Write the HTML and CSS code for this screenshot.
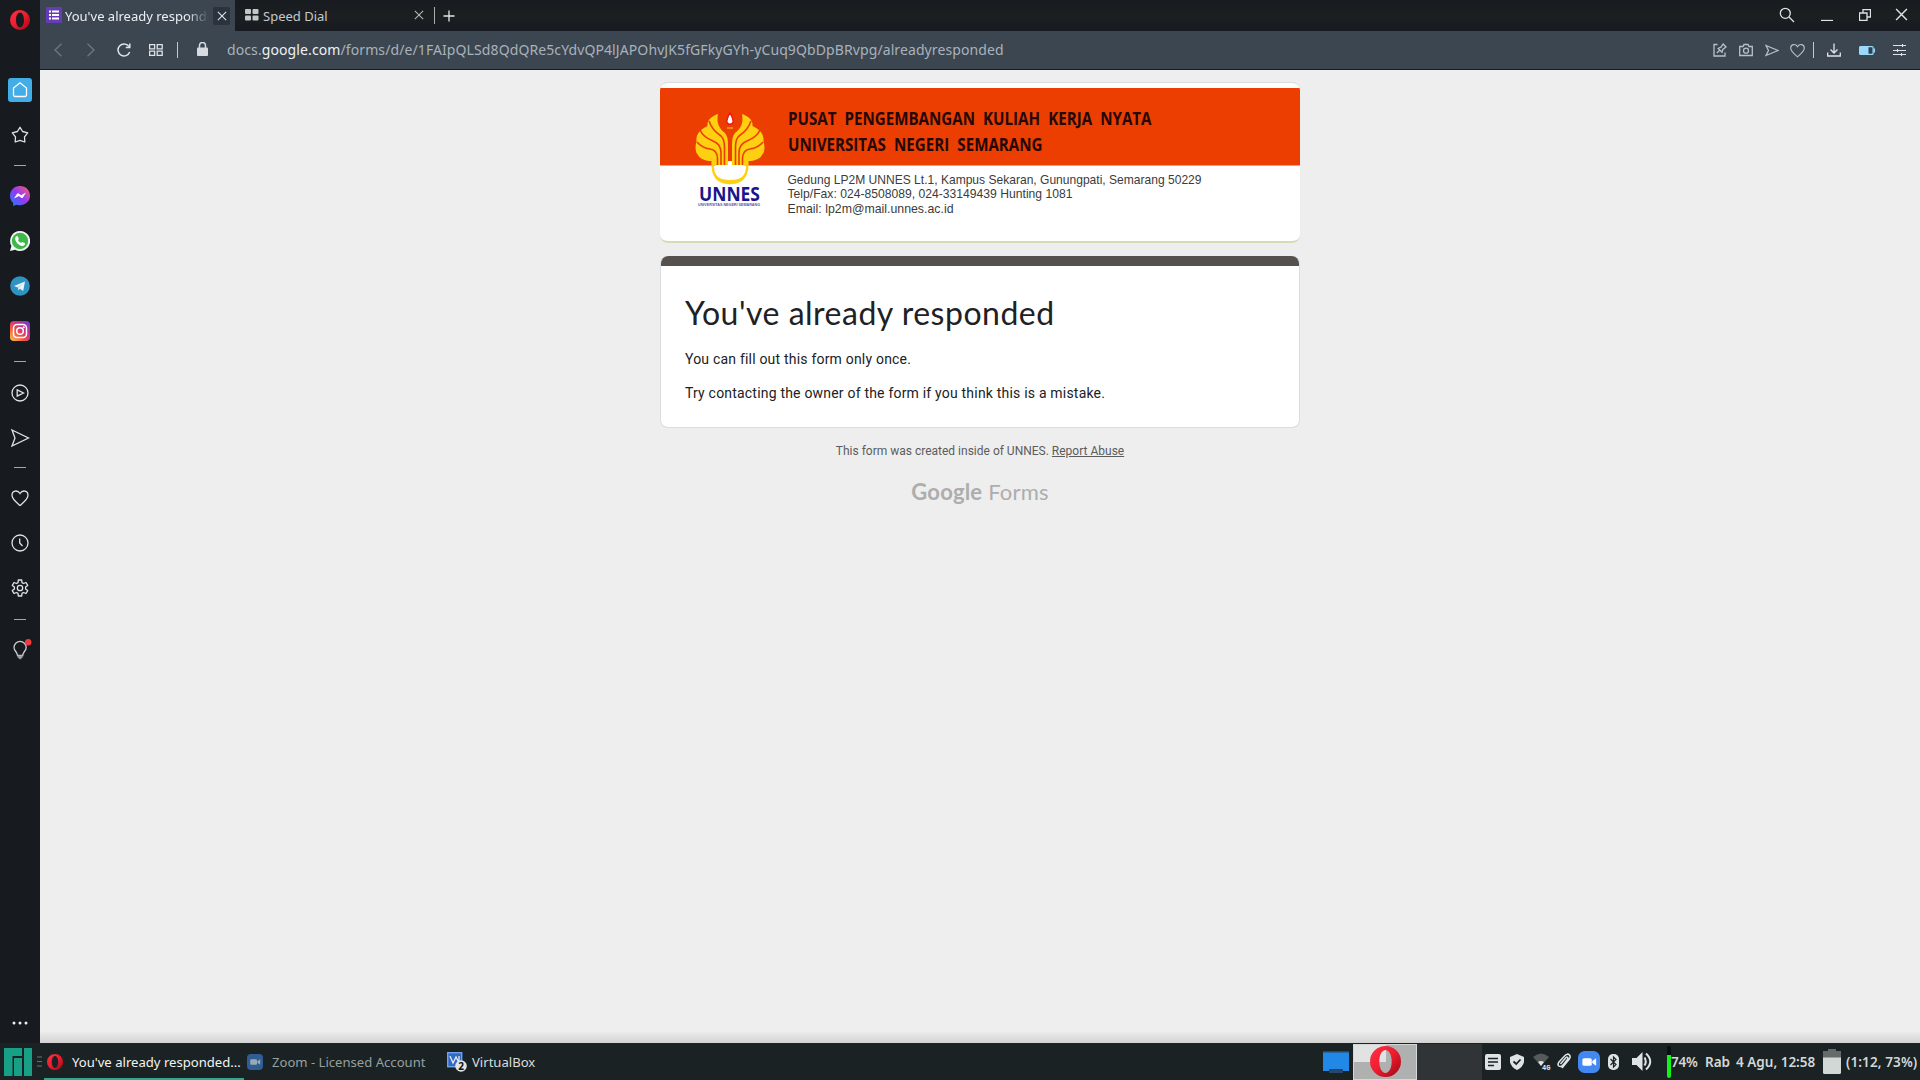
FILE: index.html
```html
<!DOCTYPE html>
<html lang="en">
<head>
<meta charset="utf-8">
<title>You've already responded</title>
<link rel="stylesheet" href="styles.css">
</head>
<body>
<svg width="0" height="0" class="defs" aria-hidden="true">
  <defs>
    <linearGradient id="opera" x1="0" y1="0" x2="1" y2="1"><stop offset="0" stop-color="#ff3344"/><stop offset=".5" stop-color="#ee1c2e"/><stop offset="1" stop-color="#9c0712"/></linearGradient>
    <linearGradient id="msg" x1="0" y1="1" x2="1" y2="0"><stop offset="0" stop-color="#1684ff"/><stop offset=".5" stop-color="#9438f5"/><stop offset="1" stop-color="#ff626b"/></linearGradient>
    <linearGradient id="insta" x1="0" y1="1" x2="1" y2="0"><stop offset="0" stop-color="#ffcf55"/><stop offset=".35" stop-color="#f5583f"/><stop offset=".65" stop-color="#c62f92"/><stop offset="1" stop-color="#5b45d0"/></linearGradient>
    <symbol id="opera-o" viewBox="0 0 20 20"><path fill="url(#opera)" fill-rule="evenodd" d="M10 0a10 10 0 1 0 0 20a10 10 0 1 0 0-20M10 2.600c2.300 0 4 3.200 4 7.400s-1.700 7.400-4 7.400s-4-3.200-4-7.400s1.700-7.400 4-7.400"/></symbol>
    <symbol id="heart" viewBox="0 0 20 20"><path d="M10 17.500C6 14 2 11 2 7.200C2 2.500 7.500 1.500 10 5.500C12.500 1.500 18 2.500 18 7.200C18 11 14 14 10 17.500z"/></symbol>
    <symbol id="send" viewBox="0 0 20 20"><path d="M2 2L18.500 10L2 18L5 10z"/></symbol>
    <symbol id="cross" viewBox="0 0 12 12"><path d="M1 1L11 11M11 1L1 11"/></symbol>
    <symbol id="camcorder" viewBox="0 0 20 20"><rect x="4" y="6.500" width="8.500" height="7" rx="1.500"/><path d="M13 9l3.500-2.300v6.600L13 11z"/></symbol>
  </defs>
</svg>

<div class="desktop">
  <div class="browser">
    <nav class="sidebar">
      <div class="logo"><svg width="20" height="20"><use href="#opera-o"/></svg></div>
      <div class="slot"><span class="home"><svg class="line" width="18" height="18" viewBox="0 0 18 18"><path d="M2.500 7L9 1.800L15.500 7V14a1.500 1.500 0 0 1-1.500 1.500H4A1.500 1.500 0 0 1 2.500 14z"/></svg></span></div>
      <div class="slot"><svg class="line" width="18" height="18" viewBox="0 0 18 18"><path stroke-linejoin="round" d="M9 1.300L11.600 5.500L16.700 6.800L13.500 10.800L13.800 16L9 14.300L4.200 16L4.500 10.800L1.300 6.800L6.400 5.500z"/></svg></div>
      <div class="dash"></div>
      <div class="slot"><svg width="20" height="20" viewBox="0 0 20 20"><path fill="url(#msg)" d="M10 0C4.300 0 0 4.200 0 9.700c0 2.900 1.200 5.400 3.100 7.100L3.200 20L6.200 18.700C13 20.500 20 16.500 20 9.700C20 4.200 15.700 0 10 0z"/><path fill="#fff" d="M4 12.500L7 7.800q.8-1 1.800-.3L11 9.200L16 6.500L13 11.400q-.8 1-1.800.3L9 10z"/></svg></div>
      <div class="slot"><svg width="20" height="20" viewBox="0 0 20 20"><path fill="#f2f6f2" d="M10 0a10 10 0 1 1-4.800 18.700L0 20L1.400 15A10 10 0 0 1 10 0z"/><circle cx="10" cy="10" r="8.200" fill="#3fb84b"/><path fill="#fff" d="M6.300 5.200l1.300-.3L8.900 8l-.9 1.200q1.200 2 3 2.900l1.200-1.200L15 12.300q0 2.700-2.700 2.700C8.500 14.500 5.300 11 5.100 7.500q.2-1.500 1.200-2.300z"/></svg></div>
      <div class="slot"><svg width="20" height="20" viewBox="0 0 20 20"><circle cx="10" cy="10" r="9.800" fill="#2f93c2"/><path fill="#e9f3fa" d="M4 10L15 5.500L13.200 15L10 12.800L8.300 14.300L7.800 11.400z"/><path fill="#9fc6dd" d="M8.300 14.300L8.600 11.700L13 7.500L7.800 11.200z"/></svg></div>
      <div class="slot"><svg width="20" height="20" viewBox="0 0 20 20"><rect width="20" height="20" rx="4" fill="url(#insta)"/><g fill="none" stroke="#fff" stroke-width="1.500"><rect x="3.500" y="3.500" width="13" height="13" rx="3.500"/><circle cx="10" cy="10" r="3.300"/></g><circle cx="13.800" cy="6.200" r="1" fill="#fff"/></svg></div>
      <div class="dash wide"></div>
      <div class="slot"><svg class="line" width="18" height="18" viewBox="0 0 18 18"><circle cx="9" cy="9" r="8"/><path d="M6.200 5.800L12.500 9L6.200 12.200z"/></svg></div>
      <div class="slot"><svg class="line" width="20" height="20"><use href="#send"/></svg></div>
      <div class="dash"></div>
      <div class="slot"><svg class="line" width="20" height="20"><use href="#heart"/></svg></div>
      <div class="slot"><svg class="line" width="18" height="18" viewBox="0 0 18 18"><circle cx="9" cy="9" r="8"/><path d="M8.700 4.500V9L11.500 12"/></svg></div>
      <div class="slot"><svg class="line" width="18" height="18" viewBox="0 0 18 18"><circle cx="9" cy="9" r="2.700"/><path stroke-linejoin="round" d="M7.300 1h3.400l.3 2.600l1.600.9L15 3.500l1.700 2.900L14.600 8v2l2.100 1.600L15 14.500l-2.400-1l-1.600.9l-.3 2.600H7.300L7 14.400l-1.600-.9L3 14.500L1.300 11.600L3.400 10V8L1.300 6.400L3 3.500l2.400 1L7 3.600z"/></svg></div>
      <div class="dash wide"></div>
      <div class="slot"><svg width="24" height="22" viewBox="0 0 24 22"><path fill="none" stroke="#c9ccd0" stroke-width="1.300" d="M9.500 16.500C9.500 13 6 12 6 8.500a6.100 6.100 0 0 1 12.200 0C18.200 12 14.700 13 14.700 16.500z"/><path fill="#9ba0a6" d="M9.600 16.500h5v2l-2.500 2l-2.500-2z"/><circle cx="20.200" cy="3.300" r="3.200" fill="#f03a3e"/></svg></div>
      <div class="more"><svg width="16" height="4" viewBox="0 0 16 4" fill="#eceef0"><circle cx="2" cy="2" r="1.500"/><circle cx="8" cy="2" r="1.500"/><circle cx="14" cy="2" r="1.500"/></svg></div>
    </nav>

    <div class="window">
      <header class="tabs">
        <div class="tab active">
          <svg width="16" height="16" viewBox="0 0 16 16"><rect width="16" height="16" rx="1" fill="#673ab7"/><path fill="#fff" d="M3 3.500h2v2H3zM6 3.500h7v2H6zM3 7h2v2H3zM6 7h7v2H6zM3 10.500h2v2H3zM6 10.500h7v2H6z"/></svg>
          <span class="tab-title">You've already responded</span>
          <span class="tab-close"><svg class="line" width="10" height="10"><use href="#cross"/></svg></span>
        </div>
        <div class="tab idle">
          <svg width="14" height="12" viewBox="0 0 14 12" fill="#c3c6c9"><rect width="6" height="5" rx="1"/><rect x="7.500" width="6" height="5" rx="1"/><rect y="6.500" width="6" height="5" rx="1"/><rect x="7.500" y="6.500" width="6" height="5" rx="1"/></svg>
          <span class="tab-title">Speed Dial</span>
          <svg class="line dim" width="10" height="10"><use href="#cross"/></svg>
        </div>
        <span class="tab-rule"></span>
        <svg class="plus" width="12" height="12" viewBox="0 0 12 12"><path d="M6 .5v11M.5 6h11"/></svg>
        <div class="controls">
          <svg class="line" width="16" height="16" viewBox="0 0 16 16"><circle cx="6.300" cy="6.300" r="5"/><path d="M10 10L15 15"/></svg>
          <svg class="line low" width="12" height="12" viewBox="0 0 12 12"><path d="M0 11.500h12"/></svg>
          <svg class="line" width="12" height="12" viewBox="0 0 12 12"><path d="M4 3.500V.5h7.500V8H8.500M.5 4H8v7.500H.5z"/></svg>
          <svg class="line" width="13" height="13"><use href="#cross"/></svg>
        </div>
      </header>

      <div class="toolbar">
        <svg class="line off" width="8" height="14" viewBox="0 0 8 14"><path d="M7.500 .8L1 7L7.500 13.200"/></svg>
        <svg class="line off fwd" width="8" height="14" viewBox="0 0 8 14"><path d="M.5 .8L7 7L.5 13.200"/></svg>
        <svg class="line reload" width="14" height="14" viewBox="0 0 14 14"><path stroke-width="1.500" d="M12.700 9A6 6 0 1 1 11.800 3.300M12.800 .5V4.500H8.800"/></svg>
        <svg class="line grid" width="14" height="12" viewBox="0 0 14 12"><path d="M.6.600h5v4.200h-5zM8.200.600h5v4.200h-5zM.6 7.200h5v4.200h-5zM8.200 7.200h5v4.200h-5z"/></svg>
        <span class="rule"></span>
        <svg class="lock" width="11" height="14" viewBox="0 0 11 14"><rect y="5.500" width="11" height="8.500" rx="1" fill="#d7dade"/><path fill="none" stroke="#d7dade" stroke-width="1.500" d="M2.500 6V3.500a3 3 0 0 1 6 0V6"/></svg>
        <span class="url">docs.<b>google.com</b>/forms/d/e/1FAIpQLSd8QdQRe5cYdvQP4lJAPOhvJK5fGFkyGYh-yCuq9QbDpBRvpg/alreadyresponded</span>
        <div class="actions">
          <svg class="line" width="14" height="14" viewBox="0 0 14 14"><path d="M4.500 1.500H1V13H12V9.500M3.800 10L6.500 7.500M5.200 5.500L9 9.200L9.800 6.500L13 4L10.200 1L8 4.200z"/></svg>
          <svg class="line" width="14" height="14" viewBox="0 0 14 14"><path d="M.7 3.500H4L5 1.500h4l1 2h3.300V12.500H.7z"/><circle cx="7" cy="7.700" r="2.500"/></svg>
          <svg class="line" width="14" height="13" viewBox="0 0 14 13"><path d="M1 1.500L13 6.500L1 11.500L3.500 6.500z"/></svg>
          <svg class="line" width="17" height="17"><use href="#heart"/></svg>
          <span class="rule"></span>
          <svg class="line down" width="14" height="14" viewBox="0 0 14 14"><path d="M7 .5V10M3.500 6.500L7 10L10.500 6.500M.7 9.500V13H13.300V9.500"/></svg>
          <svg class="batt" width="16" height="9" viewBox="0 0 16 9"><rect x=".6" y=".6" width="13.500" height="7.800" rx="1" fill="#2b4254" stroke="#9bd8fb" stroke-width="1.200"/><path fill="#9bd8fb" d="M.5 .5h9v8h-9zM14.500 2.500H16v4h-1.500z"/></svg>
          <svg class="line" width="13" height="12" viewBox="0 0 13 12"><path stroke-width="1.100" d="M0 1.500h13M0 6.500h13M0 10.500h13M9.500 0v3M4.500 5v3M8.500 9v3"/></svg>
        </div>
      </div>

      <main class="page">
        <section class="banner">
          <svg width="640" height="154" viewBox="0 0 640 154">
            <rect width="640" height="77.500" fill="#eb3e00"/>
            <g id="unnes">
              <path d="M55 77Q54 95 70 95Q86 95 85 77Q81 73 70 73Q59 73 55 77z" fill="#fff"/>
              <path fill="#ffcf12" d="M58 26C50 29 47 33 47.500 38C39 42 36 47 36.500 53C35 59 35 64 38 67C40 71 46 73 51.500 73C51 82 53 91 60 94C66 97 74 97 80 94C87 91 89 82 88.500 73C94 73 100 71 102 67C105 64 105 59 103.500 53C104 47 101 42 92.500 38C93 33 90 29 82 26C84 36 80 41 75 45Q72 48 72 57V77H82L86 78C86 88 81 92 70 92C59 92 54 88 54 78L58 77H68V57Q68 48 65 45C60 41 56 36 58 26z"/>
              <g fill="none" stroke="#eb3e00" stroke-width="1.600">
                <path d="M49 33Q52 42 61 48Q64.500 51 64.500 59V77M40 42Q43 49 53 53Q61 56 61 65V77M37 54Q42 60 50 61Q57 62 57.500 70V77"/>
                <path d="M91 33Q88 42 79 48Q75.500 51 75.500 59V77M100 42Q97 49 87 53Q79 56 79 65V77M103 54Q98 60 90 61Q83 62 82.500 70V77"/>
              </g>
              <path fill="#fff" stroke="#f11212" stroke-width="1.300" d="M70 25Q66.500 31 67 34.500Q70 38 73 34.500Q73.500 31 70 25z"/>
              <path d="M67 40h6" stroke="#ffcf12"/>
            </g>
            <text class="unnes" x="39" y="112.500" textLength="61" lengthAdjust="spacingAndGlyphs">UNNES</text>
            <text class="tiny" x="38" y="118" textLength="62" lengthAdjust="spacingAndGlyphs">UNIVERSITAS NEGERI SEMARANG</text>
            <g class="head">
              <text x="128" y="37" textLength="363.500" lengthAdjust="spacingAndGlyphs">PUSAT PENGEMBANGAN KULIAH KERJA NYATA</text>
              <text x="128" y="62.500" textLength="254.500" lengthAdjust="spacingAndGlyphs">UNIVERSITAS NEGERI SEMARANG</text>
            </g>
            <g class="addr">
              <text x="127.500" y="96" textLength="414" lengthAdjust="spacingAndGlyphs">Gedung LP2M UNNES Lt.1, Kampus Sekaran, Gunungpati, Semarang 50229</text>
              <text x="127.500" y="110.400" textLength="285" lengthAdjust="spacingAndGlyphs">Telp/Fax: 024-8508089, 024-33149439 Hunting 1081</text>
              <text x="127.500" y="125" textLength="166" lengthAdjust="spacingAndGlyphs">Email: lp2m@mail.unnes.ac.id</text>
            </g>
          </svg>
        </section>
        <section class="card">
          <h1>You've already responded</h1>
          <p>You can fill out this form only once.</p>
          <p>Try contacting the owner of the form if you think this is a mistake.</p>
        </section>
        <p class="foot">This form was created inside of UNNES. <u>Report Abuse</u></p>
        <p class="brand"><b>Google</b> Forms</p>
      </main>
    </div>
  </div>

  <footer class="taskbar">
    <svg class="manjaro" width="28" height="28" viewBox="0 0 28 28" fill="#17a086"><path d="M0 0H18V8H8.500V28H0zM10 10h8v18h-8zM20 0h8v28h-8z"/></svg>
    <svg class="grip" width="5" height="11" viewBox="0 0 5 11" stroke="#6a7271"><path d="M0 1h5M0 5.500h5M0 10h5"/></svg>
    <div class="task current"><svg width="16" height="16"><use href="#opera-o"/></svg><span>You've already responded...</span></div>
    <div class="task dimmed"><svg width="16" height="16" viewBox="0 0 20 20"><rect width="20" height="20" rx="5" fill="#315d95"/><use href="#camcorder" fill="#9aa9b8"/></svg><span>Zoom - Licensed Account</span></div>
    <div class="task vbox"><svg width="20" height="20" viewBox="0 0 20 20"><rect x=".7" y=".7" width="14" height="14" fill="#3268c0" stroke="#70a3ee" stroke-width="1.400"/><path d="M3 4l3 7l3-6l3 6V4" fill="none" stroke="#e3edfb" stroke-width="1.300"/><circle cx="14" cy="14" r="5.800" fill="#e2e4e4"/><text x="14" y="17.500">2</text></svg><span>VirtualBox</span></div>

    <div class="tray">
      <svg class="show" width="26" height="22" viewBox="0 0 26 22"><path fill="#2188e5" d="M0 1h26v19H0z"/><path fill="#24476b" d="M0 0h26v1.500H0zM6 18h14v4H6z"/></svg>
      <div class="pager on"><span class="mini"></span><svg width="31" height="31"><use href="#opera-o"/></svg></div>
      <div class="pager"></div>
      <svg class="t1" width="16" height="16" viewBox="0 0 16 16"><rect width="16" height="16" rx="2" fill="#dfe3e3"/><path stroke="#1b2224" stroke-width="1.500" d="M3 4.500h10M3 8h10M3 11.500h6"/></svg>
      <svg class="t2" width="14" height="16" viewBox="0 0 14 16"><path fill="#dfe3e3" d="M7 0L14 3V8Q13 13 7 16Q1 13 0 8V3z"/><path fill="none" stroke="#1b2224" stroke-width="1.800" d="M3.500 7.500L6.200 10L10.500 5.500"/></svg>
      <svg class="t3" width="18" height="17" viewBox="0 0 18 17"><path fill="#555a5b" d="M0 4Q8 -3 16 4L8 13z"/><path fill="#dfe3e3" d="M5 9Q8 7 11 9L8 13z"/><text x="9" y="16.500">4G</text></svg>
      <svg class="t4" width="14" height="17" viewBox="0 0 14 17"><path fill="none" stroke="#dfe3e3" stroke-width="1.500" d="M3.500 11L9 4.500Q10.500 3.500 11 5Q11 6 6 12Q4 14.500 1.800 13Q.2 11.500 2 9L8 2.500Q10.500 0 12.500 2Q14 4 12 6.500L5 15"/></svg>
      <svg class="t5" width="22" height="22" viewBox="0 0 20 20"><rect width="20" height="20" rx="6" fill="#4388f2"/><use href="#camcorder" fill="#fff"/></svg>
      <svg class="t6" width="11" height="16" viewBox="0 0 11 16"><rect width="11" height="16" rx="5" fill="#dfe3e3"/><path fill="none" stroke="#1b2224" stroke-width="1.200" d="M2.500 5L8 10.500L5.500 13V3L8 5.500L2.500 11"/></svg>
      <svg class="t7" width="20" height="19" viewBox="0 0 20 19"><path fill="#dfe3e3" d="M0 6H4.500L10.500 0V19L4.500 13H0z"/><path fill="none" stroke="#dfe3e3" stroke-width="2" d="M12.500 5.500Q15 9.500 12.500 13.500M14 1.500Q22.500 9.500 14 17.500"/></svg>
      <span class="meter"></span>
      <span class="pct">74%</span>
      <span class="clock"><span>Rab</span><span>4 Agu, 12:58</span></span>
      <svg class="cell" width="18" height="25" viewBox="0 0 18 25"><path fill="#656b6b" d="M5 0h8v2h5v8H0V2h5z"/><path fill="#d2d8d6" d="M0 8.500h18V23.500q0 1.500-1.500 1.500h-15Q0 25 0 23.500z"/></svg>
      <span class="left">(1:12, 73%)</span>
    </div>
  </footer>
</div>
</body>
</html>
```

FILE: styles.css
```css
* { box-sizing: border-box; }
body { margin: 0; font-family: "Noto Sans", sans-serif; overflow: hidden; background: #181b1f; }
svg { display: block; flex: none; }
.defs { position: absolute; }
.line { fill: none; stroke: #dfe3e7; stroke-width: 1.3; }
.desktop { display: flex; flex-direction: column; width: 1920px; height: 1080px; }
.browser { display: flex; height: 1043px; }

.sidebar { display: flex; flex-direction: column; width: 40px; background: #171b20; flex: none; }
.logo { display: flex; justify-content: center; padding-top: 10px; height: 67.5px; }
.logo svg { height: 20px; }
.slot { display: flex; align-items: center; justify-content: center; height: 45px; }
.home { display: grid; place-items: center; width: 24px; height: 24px; border-radius: 3px; background: #42ade6; }
.home .line { stroke: #fff; }
.dash { width: 12px; height: 1px; margin: 7px auto 7.5px; background: #a3a7ab; }
.dash.wide { margin: 8px auto; }
.more { display: flex; justify-content: center; margin-top: auto; padding-bottom: 18px; }

.window { flex: 1; display: flex; flex-direction: column; min-width: 0; }
.tabs { display: flex; align-items: center; height: 31px; background: linear-gradient(#181b20, #1b1f21 55%, #171a20); color: #c5c8cb; font-size: 13px; }
.tab { display: flex; align-items: center; height: 31px; }
.tab-title { white-space: nowrap; overflow: hidden; line-height: 20px; padding-top: 1px; }
.active { width: 195px; padding-left: 6px; background: #3b4651; color: #eceff2; }
.active .tab-title { width: 144px; margin-left: 3px; -webkit-mask-image: linear-gradient(90deg, #000 122px, transparent 144px); mask-image: linear-gradient(90deg, #000 122px, transparent 144px); }
.active svg, .idle svg { margin-top: -1px; }
.tab-close { display: grid; place-items: center; width: 17px; height: 18px; margin-left: 4px; background: #2a333c; border-radius: 2px; }
.tab-close svg { margin: 0; }
.idle { width: 199px; padding-left: 10px; }
.idle .tab-title { width: 151px; margin-left: 4px; }
.idle .dim { stroke: #b5b8bb; }
.tab-rule { width: 1px; height: 17px; background: #a9adb0; }
.plus { margin-left: 8px; stroke: #e5e7e9; stroke-width: 1.3; }
.controls { display: flex; align-items: center; margin-left: auto; padding: 0 12px 2px 0; }
.controls svg + svg { margin-left: 26px; }
.controls .low { padding-top: 0; }
.controls svg:nth-child(4) { margin-left: 24px; }

.toolbar { display: flex; align-items: center; height: 39px; padding: 0 14px; background: #3b4651; border-bottom: 1px solid #171b20; }
.off { stroke: #6d7780; }
.fwd { margin-left: 25px; }
.reload { margin-left: 22px; }
.grid { margin-left: 18px; }
.rule { width: 1px; height: 16px; background: #c3c8cd; }
.grid + .rule { margin-left: 14px; }
.lock { margin-left: 19px; margin-top: -2px; }
.url { margin-left: 19px; font-size: 14px; line-height: 20px; letter-spacing: .1px; color: #a9b2bb; white-space: nowrap; }
.url b { font-weight: 400; color: #eef1f4; }
.actions { display: flex; align-items: center; margin-left: auto; }
.actions svg { margin-left: 12px; }
.actions .line:nth-child(-n+4) { stroke: #b8c0c8; }
.actions svg:nth-child(4) { margin-left: 10px; }
.actions .rule { margin-left: 7px; }
.actions .down { margin-left: 13px; }
.actions .batt { margin-left: 18px; }
.actions .batt + svg { margin-left: 18px; }

.page { flex: 1; display: flex; flex-direction: column; align-items: center; padding-top: 12px; background: linear-gradient(#eee calc(100% - 12px), #d2d2d2); }
.banner { width: 640px; height: 161px; padding-top: 5px; background: #fff; border-radius: 8px; border-top: 1px solid #dadce0; border-bottom: 2px solid #d5dcb5; overflow: hidden; }
.head text { font: 700 18px "Open Sans", sans-serif; fill: #24080a; word-spacing: 5px; }
.addr text { font: 13.3px "Liberation Sans", sans-serif; fill: #3b3b3b; }
.unnes { font: 700 19px "Open Sans", sans-serif; fill: #1b148c; }
.tiny { font: 700 3.5px "Liberation Sans", sans-serif; fill: #5a55a8; }
.card { width: 640px; height: 172px; margin-top: 13px; padding: 35px 24px 0; background: linear-gradient(#55514f 10px, #fff 10px) border-box; border: 1px solid #dadce0; border-top: 0; border-radius: 8px; font-family: Roboto, sans-serif; color: #202124; }
h1 { margin: 0 0 14px; font: 400 32px/44px Lato, sans-serif; letter-spacing: .5px; white-space: nowrap; }
.card p { margin: 0 0 14px; font-size: 14px; line-height: 20px; letter-spacing: .2px; }
.foot { margin: 14px 0 0; font: 12px/18px Roboto, sans-serif; color: #5c5c5c; }
.brand { margin: 17px 0 0; font: 400 22px/30px Lato, sans-serif; letter-spacing: .2px; color: #adadad; white-space: nowrap; }
.brand b { font-weight: 700; }

.taskbar { display: flex; align-items: center; height: 37px; padding-left: 4px; background: #1b2224; font-size: 13.1px; color: #d9dddc; white-space: nowrap; }
.grip { margin-left: 5px; }
.task { display: flex; align-items: center; height: 37px; border-bottom: 2px solid transparent; border-top: 2px solid transparent; }
.current { width: 200px; margin-left: 2px; padding-left: 3px; border-bottom-color: #2fa88d; color: #f1f3f3; }
.current span { margin-left: 9px; }
.dimmed { width: 199px; padding-left: 3px; color: #98a09f; }
.dimmed span { margin-left: 9px; }
.vbox { padding-left: 4px; }
.vbox span { margin-left: 5px; }
.vbox text { font: 700 10px "Noto Sans", sans-serif; text-anchor: middle; fill: #111; }
.tray { display: flex; align-items: center; height: 37px; width: 597px; margin-left: auto; font-size: 13.5px; font-weight: 600; color: #d3d8d7; }
.pager { width: 65px; height: 36px; background: #303436; }
.on { display: grid; place-items: center; width: 64px; margin-left: 4px; background: #afb1b1; border: 1px solid #d5d8d8; }
.on > * { grid-area: 1 / 1; }
.mini { place-self: start; width: 32px; height: 17px; background: #e1e3e3; }
.t1 { margin-left: 3px; }
.t2 { margin-left: 9px; }
.t3 { margin-left: 9px; }
.t3 text { font: 700 7px "Liberation Mono", monospace; fill: #e8ebeb; }
.t4 { margin-left: 6px; }
.t5 { margin-left: 7px; }
.t6 { margin-left: 8px; }
.t7 { margin-left: 13px; }
.meter { width: 4px; height: 32px; margin-left: 15px; border-radius: 2px; background: linear-gradient(#0b0e0f 9px, #10f313 9px); }
.pct { width: 34px; letter-spacing: -.2px; }
.clock { display: flex; gap: 6px; width: 118px; }
.left { margin-left: 5px; letter-spacing: .1px; }
```
